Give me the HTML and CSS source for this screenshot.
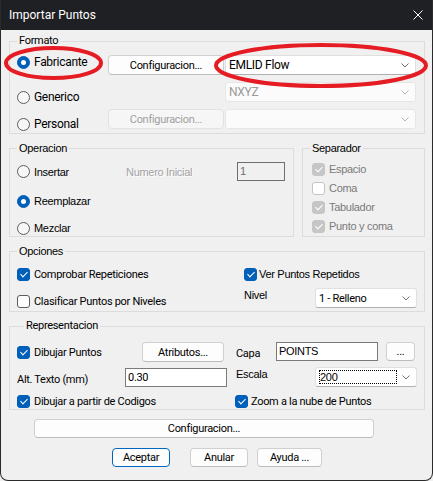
FILE: index.html
```html
<!DOCTYPE html>
<html lang="es">
<head>
  <meta charset="UTF-8" />
  <title>Importar Puntos</title>
  <link rel="stylesheet" href="styles.css">
</head>
<body>
  <div class="window">
    <div class="titlebar">
      <span class="title">Importar Puntos</span>
      <svg class="close" width="10" height="10" viewBox="0 0 10 10"><path d="M0.5 0.5 L9.5 9.5 M9.5 0.5 L0.5 9.5" stroke="#fff" stroke-width="1"/></svg>
    </div>

    <div class="content">
      <fieldset class="group formato">
        <legend>Formato</legend>
        <div class="formato-grid">
          <label class="opt"><span class="radio on"></span>Fabricante</label>
          <button class="btn">Configuracion...</button>
          <div class="combo big"><span>EMLID Flow</span><svg class="chev" width="8" height="5" viewBox="0 0 8 5"><path d="M0.5 0.5 L4 4 L7.5 0.5" fill="none" stroke="#707070"/></svg></div>

          <label class="opt low"><span class="radio"></span>Generico</label>
          <span></span>
          <div class="combo off big"><span>NXYZ</span><svg class="chev" width="8" height="5" viewBox="0 0 8 5"><path d="M0.5 0.5 L4 4 L7.5 0.5" fill="none" stroke="#b5b5b5"/></svg></div>

          <label class="opt low"><span class="radio"></span>Personal</label>
          <button class="btn" disabled>Configuracion...</button>
          <div class="combo off"><span></span><svg class="chev" width="8" height="5" viewBox="0 0 8 5"><path d="M0.5 0.5 L4 4 L7.5 0.5" fill="none" stroke="#b5b5b5"/></svg></div>
        </div>
      </fieldset>

      <div class="pair">
        <fieldset class="group operacion">
          <legend class="ms">Operacion</legend>
          <div class="op-grid">
            <label class="opt ms"><span class="radio"></span>Insertar</label>
            <span class="ms dim">Numero Inicial</span>
            <span class="field ms off num">1</span>
            <label class="opt ms"><span class="radio on"></span>Reemplazar</label>
            <label class="opt ms"><span class="radio"></span>Mezclar</label>
          </div>
        </fieldset>

        <fieldset class="group separador">
          <legend class="ms">Separador</legend>
          <div class="sep-list">
            <label class="opt ms grey"><span class="check on off"></span>Espacio</label>
            <label class="opt ms grey"><span class="check off"></span>Coma</label>
            <label class="opt ms grey"><span class="check on off"></span>Tabulador</label>
            <label class="opt ms grey"><span class="check on off"></span>Punto y coma</label>
          </div>
        </fieldset>
      </div>

      <fieldset class="group opciones">
        <legend class="ms">Opciones</legend>
        <div class="opc-grid">
          <label class="opt"><span class="check on"></span>Comprobar Repeticiones</label>
          <label class="opt ms"><span class="check on"></span>Ver Puntos Repetidos</label>
          <label class="opt bottom"><span class="check"></span>Clasificar Puntos por Niveles</label>
          <div class="nivel">
            <span class="ms nivel-label">Nivel</span>
            <div class="combo small"><span>1 - Relleno</span><svg class="chev" width="8" height="5" viewBox="0 0 8 5"><path d="M0.5 0.5 L4 4 L7.5 0.5" fill="none" stroke="#707070"/></svg></div>
          </div>
        </div>
      </fieldset>

      <fieldset class="group repr">
        <legend>Representacion</legend>
        <div class="repr-row r1">
          <label class="opt dibujar"><span class="check on"></span>Dibujar Puntos</label>
          <button class="btn atr">Atributos...</button>
          <span class="lbl capa">Capa</span>
          <span class="field ms points">POINTS</span>
          <button class="btn dots">...</button>
        </div>
        <div class="repr-row r2">
          <span class="lbl alt">Alt. Texto (mm)</span>
          <span class="field val">0.30</span>
          <span class="ms lbl escala">Escala</span>
          <div class="combo small"><span class="focus ms">200</span><svg class="chev" width="8" height="5" viewBox="0 0 8 5"><path d="M0.5 0.5 L4 4 L7.5 0.5" fill="none" stroke="#707070"/></svg></div>
        </div>
        <div class="repr-row r3">
          <label class="opt codigos"><span class="check on"></span>Dibujar a partir de Codigos</label>
          <label class="opt zoom"><span class="check on"></span>Zoom a la nube de Puntos</label>
        </div>
      </fieldset>

      <div class="wide-row">
        <button class="btn wide">Configuracion...</button>
      </div>

      <div class="actions">
        <button class="btn default">Aceptar</button>
        <button class="btn">Anular</button>
        <button class="btn ayuda">Ayuda ...</button>
      </div>
    </div>

    <!-- red marks drawn over the dialog -->
    <svg class="marks" width="433" height="481" viewBox="0 0 433 481">
      <ellipse cx="52.5" cy="63" rx="47.5" ry="15" fill="none" stroke="#e51c23" stroke-width="4"/>
      <ellipse cx="320" cy="65.5" rx="105" ry="20.5" fill="none" stroke="#e51c23" stroke-width="4"/>
    </svg>
  </div>
</body>
</html>
```

FILE: styles.css
```css
* {
  box-sizing: border-box;
}
body {
  margin: 0;
  background: #f0f0f0;
  font-family: Roboto, "Noto Sans", sans-serif;
  font-size: 11px;
  letter-spacing: -0.3px;
  color: #000;
}
.window {
  position: relative;
  width: 433px;
  height: 481px;
  background: #f0f0f0;
  border: 1px solid #2b2b2b;
  border-top: 0;
  border-radius: 0 0 8px 8px;
  overflow: hidden;
}
.titlebar {
  height: 30px;
  background: #1f2024;
  color: #fff;
  display: flex;
  align-items: center;
  justify-content: space-between;
  padding: 0 9px 0 8px;
  font-size: 12px;
  letter-spacing: 0;
}
.content {
  padding: 4px 7px 0 8px;
}
.ms {
  font-family: "Liberation Sans", Arial, sans-serif;
}

/* group boxes */
.group {
  margin: 0;
  padding: 0;
  border: 1px solid #dcdcdc;
  min-width: 0;
}
.group legend {
  margin-left: 7px;
  padding: 0 2px;
  line-height: 14px;
}
.content > * + * {
  margin-top: 7px;
}

/* radios and checks */
.opt {
  display: flex;
  align-items: center;
  gap: 4px;
  height: 14px;
  white-space: nowrap;
}
.radio {
  width: 13px;
  height: 13px;
  border-radius: 50%;
  border: 1px solid #5c5c5c;
  background: #f7f7f7;
  flex: none;
  position: relative;
}
.radio.on {
  border-color: #005fb8;
  background: #005fb8;
}
.radio.on::after {
  content: "";
  position: absolute;
  left: 3px;
  top: 3px;
  width: 5px;
  height: 5px;
  border-radius: 50%;
  background: #fff;
}
.check {
  width: 13px;
  height: 13px;
  border-radius: 3px;
  border: 1px solid #5c5c5c;
  background: #fdfdfd;
  flex: none;
  position: relative;
}
.check.on {
  border-color: #005fb8;
  background: #005fb8;
}
.check.on::after {
  content: "";
  position: absolute;
  left: 3.5px;
  top: 1.5px;
  width: 3px;
  height: 6px;
  border: solid #fff;
  border-width: 0 1px 1px 0;
  transform: rotate(45deg);
}
.check.off {
  border-color: #c4c4c4;
  background: #fff;
}
.check.on.off {
  border-color: #c6c6c6;
  background: #c6c6c6;
}
.grey {
  color: #7a7a7a;
}
.dim {
  color: #a3a3a3;
  text-shadow: 1px 1px 0 #fff;
}

/* buttons, combos, fields */
.btn {
  height: 20px;
  padding: 0;
  background: #fdfdfd;
  border: 1px solid #d0d0d0;
  border-bottom-color: #bcbcbc;
  border-radius: 4px;
  font: inherit;
  letter-spacing: inherit;
  color: #000;
}
.btn:disabled {
  background: #f6f6f6;
  border-color: #e2e2e2;
  color: #a0a0a0;
}
.combo {
  height: 20px;
  display: flex;
  align-items: center;
  justify-content: space-between;
  padding: 0 6px 0 3px;
  background: #fff;
  border: 1px solid #e0e0e0;
  border-bottom-color: #b0b0b0;
  border-radius: 3px;
}
.combo.big {
  font-size: 12px;
}
.combo.off {
  background: #fbfbfb;
  border-color: #e6e6e6;
  color: #9a9a9a;
}
.chev {
  flex: none;
}
.field {
  height: 19px;
  line-height: 17px;
  padding-left: 2px;
  background: #fff;
  border: 1px solid #7a7a7a;
}
.field.off {
  background: #f0f0f0;
  border-color: #6e6e6e;
  color: #6e6e6e;
}

/* formato */
.formato-grid {
  display: grid;
  grid-template-columns: 91px 117px 191px;
  grid-auto-rows: 20px;
  row-gap: 7px;
  padding: 7px 0 4px 7px;
}
.formato-grid .opt {
  font-size: 12px;
}
.formato-grid .low {
  margin-top: 8px;
}
.formato-grid .btn {
  width: 116px;
}

/* operacion / separador */
.pair {
  display: flex;
  gap: 8px;
}
.operacion {
  width: 285px;
}
.separador {
  width: 123px;
}
.op-grid {
  display: grid;
  grid-template-columns: 109px 111px 48px;
  grid-template-rows: 19px 14px 14px;
  row-gap: 13px;
  align-items: center;
  padding: 7px 0 1px 7px;
}
.op-grid .opt {
  grid-column: 1;
}
.sep-list {
  display: flex;
  flex-direction: column;
  gap: 5px;
  padding: 7px 0 0 9px;
}

/* opciones */
.opc-grid {
  display: grid;
  grid-template-columns: 227px 173px;
  grid-template-rows: 14px 20px;
  row-gap: 7px;
  padding: 9px 0 3px 7px;
}
.opc-grid .bottom {
  align-self: end;
}
.opc-grid .ms {
  gap: 2px;
}
.nivel {
  display: flex;
  align-items: flex-start;
}
.nivel-label {
  width: 71px;
  line-height: 14px;
}
.combo.small {
  width: 102px;
}

/* representacion */
.repr {
  padding: 9px 0 1px 7px;
}
.repr-row {
  display: flex;
  align-items: center;
  height: 20px;
}
.repr-row.r2 {
  margin-top: 5px;
}
.repr-row.r3 {
  margin-top: 7px;
  height: 14px;
}
.dibujar {
  width: 125px;
}
.atr {
  width: 82px;
}
.capa {
  width: 40px;
  margin-left: 12px;
  padding-top: 2px;
}
.points {
  width: 102px;
  align-self: flex-start;
}
.dots {
  width: 29px;
  height: 19px;
  margin-left: 8px;
  align-self: flex-start;
}
.alt {
  width: 108px;
  padding-top: 4px;
}
.val {
  width: 102px;
  align-self: flex-end;
}
.escala {
  width: 79px;
  margin-left: 9px;
  align-self: flex-start;
  line-height: 14px;
}
.focus {
  width: 78px;
  height: 14px;
  line-height: 12px;
  border: 1px dotted #000;
}
.codigos {
  width: 218px;
}
.zoom {
  gap: 3px;
}

/* bottom buttons */
.content > .wide-row {
  margin-top: 9px;
  padding-left: 25px;
}
.wide {
  width: 340px;
  height: 19px;
}
.content > .actions {
  display: flex;
  margin-top: 10px;
  padding-left: 103px;
}
.actions .btn {
  width: 58px;
  height: 19px;
  margin-right: 20px;
}
.actions .btn + .btn {
  margin-right: 0;
}
.actions .ayuda {
  width: 65px;
  margin-left: 9px;
}
.btn.default {
  border-color: #0067c0;
}

.marks {
  position: absolute;
  left: 0;
  top: 0;
  pointer-events: none;
}
```
